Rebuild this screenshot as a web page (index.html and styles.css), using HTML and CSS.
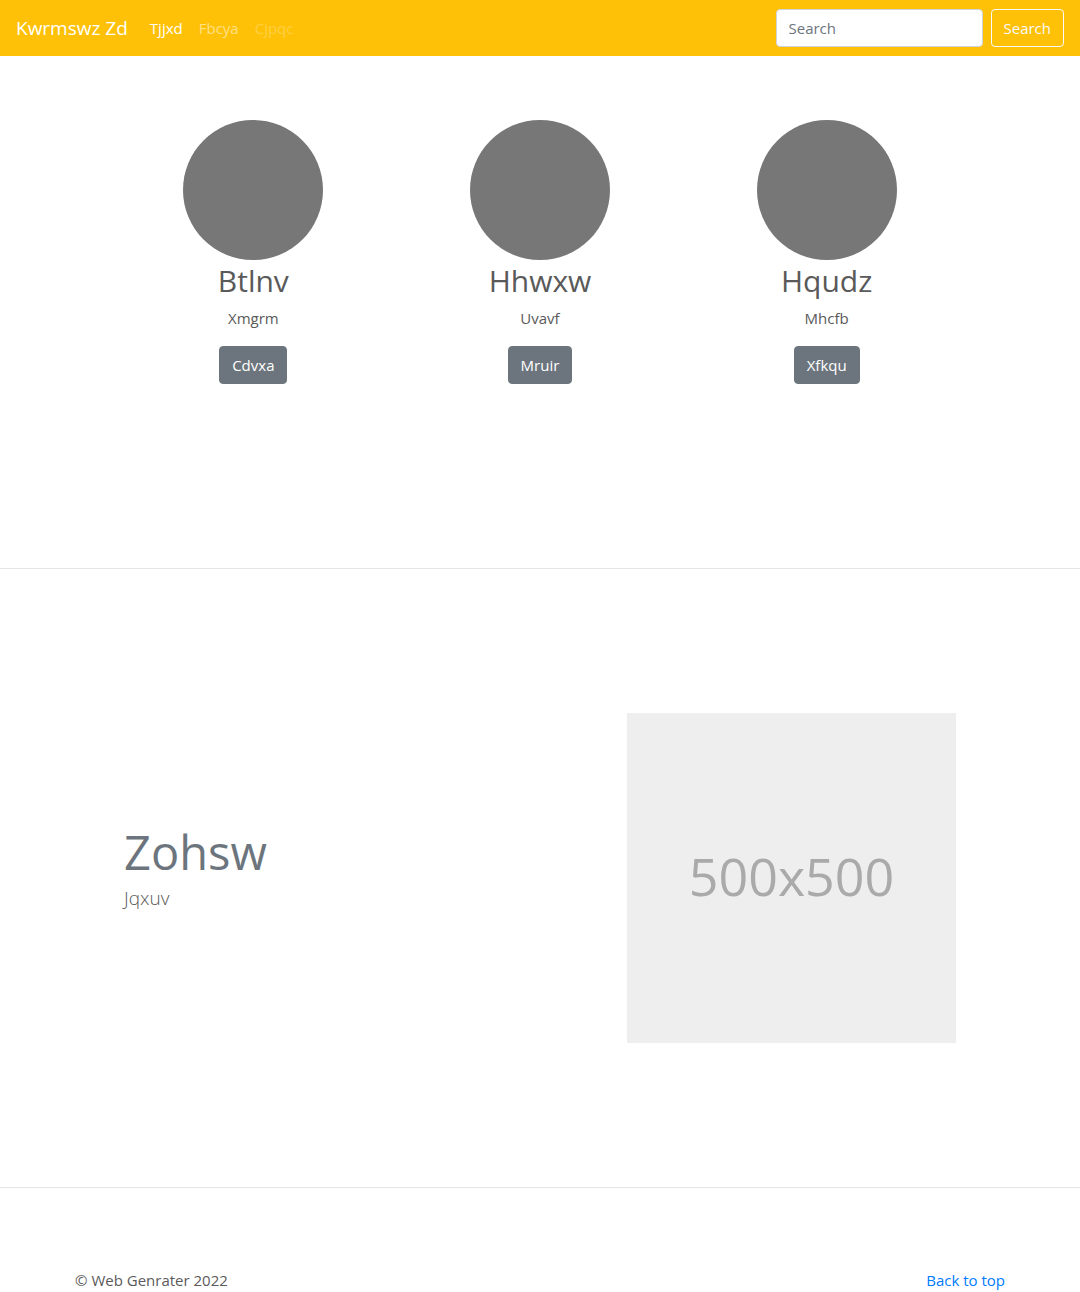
FILE: index.html
```html
<!DOCTYPE html>
<html lang="en">
<head>
<meta charset="utf-8">
<meta name="viewport" content="width=device-width, initial-scale=1">
<title>Kwrmswz Zd</title>
<link rel="stylesheet" href="styles.css">
</head>
<body id="top">
<header class="navbar">
  <a class="brand" href="#top">Kwrmswz Zd</a>
  <nav class="nav">
    <a class="nav-link active" href="#top">Tjjxd</a>
    <a class="nav-link" href="#features">Fbcya</a>
    <a class="nav-link disabled" href="#top" aria-disabled="true">Cjpqc</a>
  </nav>
  <form class="search">
    <input class="search-input" type="search" placeholder="Search" aria-label="Search">
    <button class="btn btn-outline" type="button">Search</button>
  </form>
</header>
<main>
  <section class="cards">
    <div class="card">
      <div class="circle"></div>
      <h2>Btlnv</h2>
      <p>Xmgrm</p>
      <button class="btn" type="button">Cdvxa</button>
    </div>
    <div class="card">
      <div class="circle"></div>
      <h2>Hhwxw</h2>
      <p>Uvavf</p>
      <button class="btn" type="button">Mruir</button>
    </div>
    <div class="card">
      <div class="circle"></div>
      <h2>Hqudz</h2>
      <p>Mhcfb</p>
      <button class="btn" type="button">Xfkqu</button>
    </div>
  </section>
  <hr>
  <section class="feature" id="features">
    <div class="feature-text">
      <h2 class="feature-title">Zohsw</h2>
      <p class="lead">Jqxuv</p>
    </div>
    <div class="placeholder">500x500</div>
  </section>
  <hr>
</main>
<footer class="footer">
  <p>© Web Genrater 2022</p>
  <a href="#top">Back to top</a>
</footer>
</body>
</html>
```
FILE: styles.css
```css
* {
  box-sizing: border-box;
}

body {
  margin: 0;
  background: #fff;
  color: #5a5a5a;
  font: 400 15px/24px "Open Sans", "Noto Sans", sans-serif;
}

h2,
p {
  margin: 0;
}

a {
  color: #007bff;
  text-decoration: none;
}

hr {
  margin: 0;
  border: 0;
  border-top: 1px solid #e5e5e5;
}

.navbar {
  display: flex;
  align-items: center;
  padding: 9px 16px;
  background: #ffc107;
}

.brand {
  margin-right: 14px;
  color: #fff;
  font-size: 19px;
}

.nav {
  display: flex;
}

.nav-link {
  padding: 7px 8px;
  color: rgba(255, 255, 255, 0.5);
}

.nav-link.active {
  color: #fff;
}

.nav-link.disabled {
  color: rgba(255, 255, 255, 0.25);
}

.search {
  display: flex;
  gap: 8px;
  margin-left: auto;
}

.search-input {
  width: 207px;
  height: 38px;
  padding: 6px 12px;
  border: 1px solid #ced4da;
  border-radius: 4px;
  background: #fff;
  color: #495057;
  font: inherit;
}

.search-input::placeholder {
  color: #6c757d;
}

.btn {
  height: 38px;
  padding: 0 12px;
  border: 1px solid #6c757d;
  border-radius: 4px;
  background: #6c757d;
  color: #fff;
  font: inherit;
}

.btn-outline {
  border-color: #f8f9fa;
  background: transparent;
  color: #f8f9fa;
}

.cards {
  display: grid;
  grid-template-columns: repeat(3, 1fr);
  max-width: 860px;
  margin: 0 auto;
  padding: 64px 0 184px;
}

.card {
  display: flex;
  flex-direction: column;
  align-items: center;
}

.card h2 {
  margin-bottom: 4px;
  font-size: 30px;
  font-weight: 400;
  line-height: 42px;
}

.card p {
  margin-bottom: 16px;
}

.circle {
  width: 140px;
  height: 140px;
  border-radius: 50%;
  background: #777;
}

.feature {
  display: flex;
  align-items: center;
  justify-content: space-between;
  max-width: 832px;
  margin: 0 auto;
  padding: 144px 0;
}

.feature-text {
  padding-bottom: 20px;
}

.feature-title {
  color: #6c757d;
  font-size: 47px;
  font-weight: 400;
  line-height: 60px;
}

.lead {
  font-size: 19px;
  font-weight: 300;
  line-height: 32px;
}

.placeholder {
  display: flex;
  align-items: center;
  justify-content: center;
  width: 329px;
  height: 330px;
  padding-bottom: 4px;
  background: #eee;
  color: #aaa;
  font-size: 52px;
}

.footer {
  display: flex;
  justify-content: space-between;
  max-width: 930px;
  margin: 0 auto;
  padding: 80px 0 0;
}
```
